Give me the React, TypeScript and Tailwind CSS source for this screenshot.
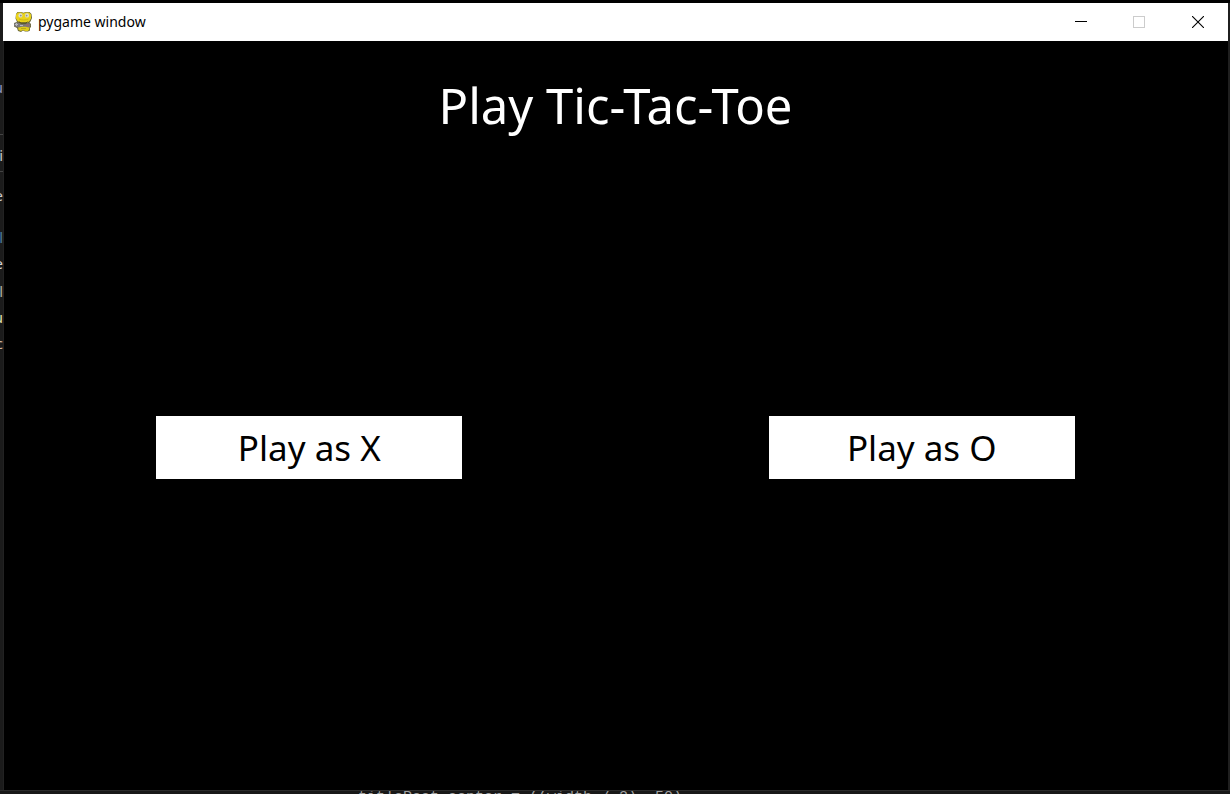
import React from "react";

type Fragment = { text: string; height: string; color: string };

const gutter: Fragment[] = [
  { text: "u", height: "h-6", color: "text-[#8a8fc0]" },
  { text: "", height: "h-9", color: "border-b border-[#444444]" },
  { text: "", height: "h-2", color: "" },
  { text: "i", height: "h-6", color: "text-[#c8c8c8]" },
  { text: "", height: "h-1", color: "" },
  { text: "", height: "h-3", color: "border-t border-[#444444]" },
  { text: "e", height: "h-6", color: "text-[#c8c8c8]" },
  { text: "", height: "h-4", color: "" },
  { text: "l", height: "h-7", color: "text-[#4a7a9c]" },
  { text: "e", height: "h-6", color: "text-[#d4d4d4]" },
  { text: "l", height: "h-8", color: "text-[#b0b0a0]" },
  { text: "u", height: "h-5", color: "text-[#dcdcaa]" },
  { text: "c", height: "h-8", color: "text-[#d0b8a0]" },
];

function SnakeIcon() {
  return (
    <svg className="h-5 w-5 shrink-0" viewBox="0 0 20 20" aria-hidden="true">
      <path
        d="M4.500 0h4l2 .8 2-.8h4L18.500 2l.5 4-1.500 3.500-1 1 1.500 1.500v3l-1 1v2.500L15 19.500h-3l-2-1-2 1.500-3-1-1-3-3-1.500V11l3-1L2.500 6.500 3 2Z"
        fill="#6d6a3a"
      />
      <path d="M5 .5h3.500l2 1 2-1H16L18 2.500v4L16.500 9l-2 1.500H7.500L4.500 9 3 6.500v-4Z" fill="#ead31a" />
      <path d="M5 14h11.500l-.3 3.500L15 19h-3l-2-1-2 1-2.500-1Z" fill="#dfcb1a" />
      <ellipse cx="7.400" cy="3.400" rx="2" ry="2.200" fill="#dcddd4" />
      <ellipse cx="14" cy="3.400" rx="2" ry="2.200" fill="#dcddd4" />
      <circle cx="7.800" cy="3.600" r=".9" fill="#8f9186" />
      <circle cx="13.600" cy="3.600" r=".9" fill="#8f9186" />
      <path d="M6 7c2.500 1.300 7 1.300 9.500 0" stroke="#cdb716" fill="none" />
      <path d="M1 11.500 3.500 10.500l3 .5 2 1.200h4L14.500 11l2.500.5.5 2-1.500 2-3-.8H9L6 15.500l-3-.5-2-1.200Z" fill="#7b797c" />
      <path d="M2 12.500h3M3.500 11v3M7 13.500h3" stroke="#b9b9be" />
      <path d="M13 12h3v2.500h-3Z" fill="#94706c" />
      <path d="M6 9.800 8 11h5l1.500-1.200" stroke="#4d4a28" fill="none" />
      <path d="M8 16.500h5" stroke="#b9a81a" />
    </svg>
  );
}

function TitleBar() {
  return (
    <header className="flex h-[38px] shrink-0 items-center bg-white pl-[10px] text-black">
      <SnakeIcon />
      <span className="ml-[5px] flex-1 pb-px text-[14px] leading-5">pygame window</span>
      <button type="button" aria-label="Minimize" className="flex h-full w-[58px] items-center justify-center">
        <svg className="h-3 w-3" viewBox="0 0 12 12" shapeRendering="crispEdges">
          <path d="M0 5.500h12" stroke="black" />
        </svg>
      </button>
      <button type="button" aria-label="Maximize" disabled className="flex h-full w-[58px] items-center justify-center">
        <svg className="h-3 w-3" viewBox="0 0 12 12" shapeRendering="crispEdges">
          <path d="M.5.5h11v11H.5Z" fill="none" stroke="#cccccc" />
        </svg>
      </button>
      <button type="button" aria-label="Close" className="flex h-full w-[60px] items-center justify-center">
        <svg className="h-3 w-3" viewBox="0 0 12 12">
          <path d="m0 0 12 12M12 0 0 12" stroke="black" strokeWidth="1.100" />
        </svg>
      </button>
    </header>
  );
}

export default function App() {
  return (
    <div className="flex h-screen flex-col overflow-hidden bg-[#1b1b1b] font-['Noto_Sans','Open_Sans',sans-serif]">
      <div className="h-[3px] shrink-0 bg-black" />
      <div className="flex min-h-0 flex-1">
        <div
          aria-hidden="true"
          className="flex w-[3px] shrink-0 flex-col overflow-hidden pt-[72px] text-[15px]"
        >
          {gutter.map((g, i) => (
            <div key={i} className={`flex shrink-0 items-center justify-end ${g.height} ${g.color}`}>
              {g.text}
            </div>
          ))}
        </div>
        <main className="flex min-w-0 flex-1 flex-col">
          <TitleBar />
          <section className="grid flex-1 grid-rows-2 bg-black shadow-[inset_1px_0_#222222]">
            <h1 className="pt-[30px] text-center text-[49px] leading-[68px] text-white">Play Tic-Tac-Toe</h1>
            <div className="grid grid-cols-8 content-start text-[35px] leading-[63px] text-black">
              <button type="button" className="col-span-2 col-start-2 bg-white">
                Play as X
              </button>
              <button type="button" className="col-span-2 col-start-6 bg-white">
                Play as O
              </button>
            </div>
          </section>
        </main>
        <div className="w-[2px] shrink-0 bg-[#1f1f1f]" />
      </div>
      <div
        aria-hidden="true"
        className="h-1 shrink-0 overflow-hidden border-t border-[#2b2b2b] bg-[#181818] pl-[358px] font-['Liberation_Mono',monospace] text-[15px] leading-[14px] whitespace-pre text-[#a0a0a0]"
      >
        titleRect.center = ((width / 2), 50)
      </div>
    </div>
  );
}
